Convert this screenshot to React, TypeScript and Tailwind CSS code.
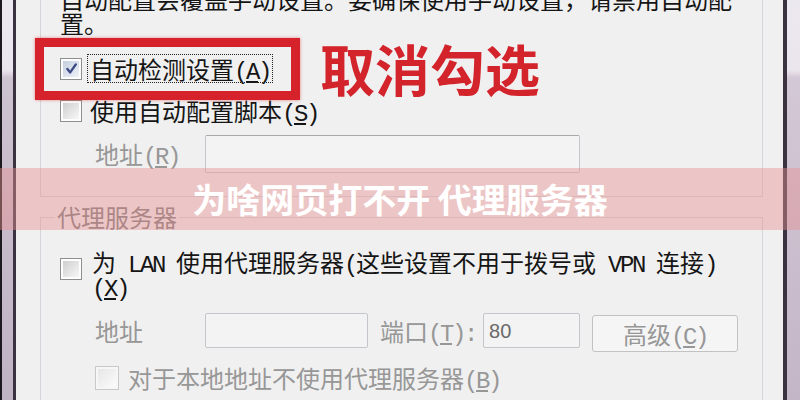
import type { ReactNode } from "react"

// Half-width Latin inside the SimSun-style dialog text
const mono = "font-['Liberation_Mono',monospace] text-[24px] leading-[14px] tracking-[-2.4px]"

function Key({ k }: { k: string }) {
  return (
    <span className={mono}>
      (<span className="underline underline-offset-2">{k}</span>)
    </span>
  )
}

function Check({ checked = false, disabled = false, size = "h-[22px] w-[22px]" }: { checked?: boolean; disabled?: boolean; size?: string }) {
  return (
    <span
      className={`flex shrink-0 items-center justify-center border p-[2px] ${size} ${
        disabled ? "border-[#c9c9c9] bg-[#f6f6f6]" : "border-[#8e8f8f] bg-[#fdfdfd]"
      }`}
    >
      <span
        className={`flex h-full w-full items-center justify-center ${
          checked
            ? "bg-gradient-to-br from-[#c5cfdf] to-[#eef2f8]"
            : disabled
              ? "bg-gradient-to-br from-[#e6e6e6] to-[#fbfbfb]"
              : "bg-gradient-to-br from-[#cfcfcf] to-[#f7f7f7]"
        }`}
      >
        {checked && (
          <svg viewBox="0 0 12 12" className="h-[13px] w-[13px]">
            <path d="M2.2 6.4 L4.8 9.6 L10 2.2" fill="none" stroke="#3b4a86" strokeWidth="2.2" strokeLinecap="round" strokeLinejoin="round" />
          </svg>
        )}
      </span>
    </span>
  )
}

function Field({ className, children }: { className: string; children?: ReactNode }) {
  return (
    <div className={`flex shrink-0 items-center rounded-[2px] border border-[#c3c6cb] bg-[#f3f3f3] ${className}`}>
      {children}
    </div>
  )
}

export default function App() {
  return (
    <div className="relative flex h-[400px] w-[800px] overflow-hidden bg-[#f0f0f0] font-['Noto_Sans_CJK_SC',sans-serif] text-[24px] leading-[24px] text-[#151515]">
      {/* window frame, left */}
      <div className="flex w-[16px] shrink-0">
        <div className="w-[2px] bg-[#1c1a1e]" />
        <div className="w-[11px] bg-[linear-gradient(to_bottom,#ece8ef_0,#ebe6ee_70px,#cdc2d0_78px,#c0b3c4_100%)]" />
        <div className="w-[3px] bg-[#3a3240]" />
      </div>

      <div className="flex flex-1 flex-col pl-[24px] pr-[20px]">
        {/* automatic configuration group */}
        <div className="flex h-[197px] shrink-0 flex-col border-x border-b border-[#d2d6da] pl-[19px]">
          <p className="-mt-[13px] whitespace-nowrap">
            自动配置会覆盖手动设置。要确保使用手动设置，请禁用自动配
            <br />
            置。
          </p>

          <div className="mt-[20px] flex h-[27px] items-center">
            <Check checked />
            <span className="ml-[6px] flex h-[27px] items-center px-[2px] outline-1 outline-dotted outline-[#222]">
              <span>
                自动检测设置<Key k="A" />
              </span>
            </span>
          </div>

          <div className="mt-[17px] flex h-[24px] items-center gap-[8px]">
            <Check />
            <span>
              使用自动配置脚本<Key k="S" />
            </span>
          </div>

          <div className="mt-[12px] flex items-center">
            <span className="ml-[35px] w-[110px] text-[#979797]">
              地址<Key k="R" />
            </span>
            <Field className="h-[38px] w-[375px] border-t-[#a9a9a9]" />
          </div>
        </div>

        {/* proxy server group */}
        <div className="mt-[20px] flex flex-1 flex-col border-x border-t border-[#d2d6da] pl-[19px]">
          <span className="-ml-[5px] -mt-[13px] self-start bg-[#f0f0f0] px-[2px] text-[#7c7c7c]">代理服务器</span>

          <div className="mt-[21px] flex items-start gap-[10px]">
            <span className="mt-[8px]">
              <Check />
            </span>
            <span className="whitespace-nowrap">
              为<span className={mono}> LAN </span>使用代理服务器<span className={mono}>(</span>这些设置不用于拨号或<span className={mono}> VPN </span>连接<span className={mono}>)</span>
              <br />
              <span className={mono}>
                (<span className="underline underline-offset-2">X</span>)
              </span>
            </span>
          </div>

          <div className="mt-[15px] flex items-start text-[#979797]">
            <span className="ml-[35px] w-[110px] leading-[35px]">地址</span>
            <Field className="h-[35px] w-[163px]" />
            <span className="ml-[12px] leading-[35px]">
              端口<Key k="T" />
              <span className={mono}>:</span>
            </span>
            <Field className="ml-[7px] h-[35px] w-[97px] pl-[5px] font-['Liberation_Sans',sans-serif] text-[20px] text-[#6a6a6a]">80</Field>
            <div className="ml-[12px] mt-[2px] flex h-[37px] w-[146px] items-center justify-center rounded-[3px] border border-[#c2c2c2] bg-[#f5f5f5]">
              <span>
                高级<Key k="C" />
              </span>
            </div>
          </div>

          <div className="mt-[14px] flex h-[24px] items-center text-[#979797]">
            <span className="ml-[35px]">
              <Check disabled size="h-[24px] w-[24px]" />
            </span>
            <span className="ml-[9px]">
              对于本地地址不使用代理服务器<Key k="B" />
            </span>
          </div>
        </div>
      </div>

      {/* window frame, right */}
      <div className="flex w-[17px] shrink-0">
        <div className="w-[4px] bg-[#3a3240]" />
        <div className="flex-1 bg-[linear-gradient(to_bottom,#ece8ef_0,#ebe6ee_70px,#d3c8d6_78px,#c3b6c7_100%)]" />
      </div>

      {/* annotation */}
      <div className="absolute left-[35px] top-[38px] h-[62px] w-[265px] border-[9px] border-[#d5222b] shadow-[0_0_3px_rgba(225,60,70,0.6)]" />
      <div className="absolute left-[320px] top-[40px] text-[55px] font-bold leading-[55px] text-[#d3232b]">取消勾选</div>

      {/* title banner */}
      <div className="absolute left-0 right-0 top-[168px] flex h-[62px] items-center justify-center bg-[rgba(231,147,147,0.45)]">
        <span className="text-[34px] font-bold leading-[34px] text-white">为啥网页打不开 代理服务器</span>
      </div>
    </div>
  )
}
